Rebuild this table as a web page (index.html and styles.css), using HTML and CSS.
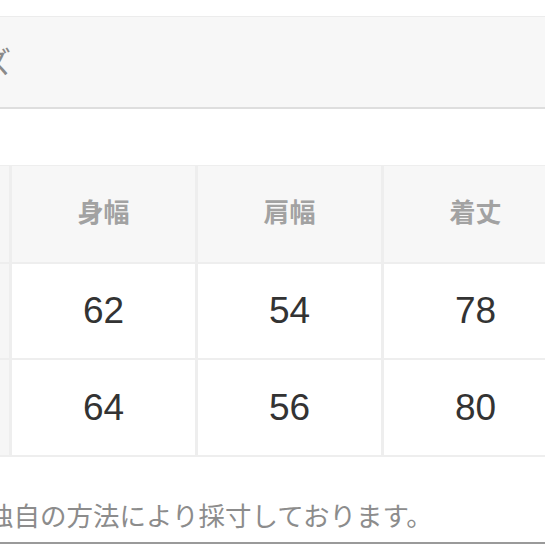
FILE: index.html
```html
<!DOCTYPE html>
<html lang="ja">
<head>
<meta charset="utf-8">
<link rel="stylesheet" href="styles.css">
</head>
<body>
<div class="page">
  <div class="title-box"><span class="title">サイズ</span></div>
  <div class="size-table">
    <div class="cell side head"></div>
    <div class="cell head"><span class="head-text">身幅</span></div>
    <div class="cell head"><span class="head-text">肩幅</span></div>
    <div class="cell head"><span class="head-text">着丈</span></div>
    <div class="cell side"></div>
    <div class="cell val">62</div>
    <div class="cell val">54</div>
    <div class="cell val">78</div>
    <div class="cell side"></div>
    <div class="cell val">64</div>
    <div class="cell val">56</div>
    <div class="cell val">80</div>
  </div>
  <p class="note">当店独自の方法により採寸しております。</p>
  <div class="rule"></div>
</div>
</body>
</html>
```

FILE: styles.css
```css
html, body {
  margin: 0;
  padding: 0;
  background: #ffffff;
}
.page {
  width: 545px;
  height: 545px;
  overflow: hidden;
  display: flex;
  flex-direction: column;
  padding-top: 16px;
  box-sizing: border-box;
  font-family: "Noto Sans CJK JP", "Noto Sans", sans-serif;
}
.title-box {
  flex: none;
  height: 90px;
  background: #f7f7f7;
  border-top: 1px solid #ececec;
  border-bottom: 2px solid #dedede;
  display: flex;
  align-items: center;
  overflow: hidden;
}
.title {
  margin-left: -78px;
  font-size: 30px;
  color: #8a8a8a;
  white-space: nowrap;
  line-height: 1;
  margin-top: -4px;
}
.size-table {
  flex: none;
  margin-top: 56px;
  display: grid;
  grid-template-columns: 9px 183px 183px 183px;
  grid-template-rows: 96px 94px 95px;
  column-gap: 3px;
  row-gap: 2px;
  padding: 1px 0 2px 0;
  background: #eeeeee;
  width: 570px;
}
.cell {
  display: flex;
  align-items: center;
  justify-content: center;
  background: #ffffff;
}
.cell.head {
  background: #f7f7f7;
  font-size: 26px;
  font-weight: 600;
  color: #a2a2a2;
}
.head-text {
  line-height: 1;
  margin-top: -6px;
}
.cell.side {
  background: #f6f6f6;
}
.cell.val {
  font-family: "Liberation Sans", Arial, sans-serif;
  font-size: 37px;
  color: #333333;
}
.note {
  flex: none;
  margin: 40px 0 0 -66px;
  font-size: 26.5px;
  line-height: 36px;
  color: #8c8c8c;
  white-space: nowrap;
}
.rule {
  flex: none;
  margin-top: auto;
  margin-bottom: 1px;
  height: 2px;
  background: #9a9a9a;
}
```
